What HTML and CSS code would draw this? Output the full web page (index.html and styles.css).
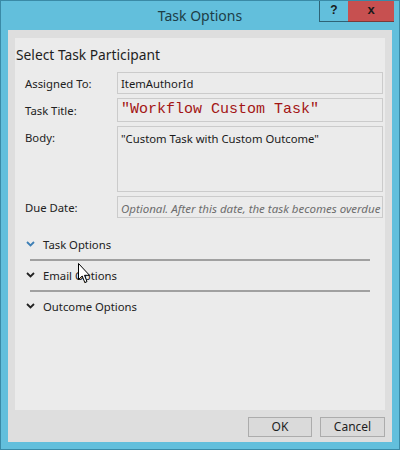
FILE: index.html
```html
<!DOCTYPE html>
<html>
<head>
<meta charset="utf-8">
<link rel="stylesheet" href="styles.css">
</head>
<body>
<div class="window">
  <div class="titlebar">
    <div></div>
    <div class="title">Task Options</div>
    <div class="controls">
      <div class="btn-help">?</div>
      <div class="btn-close">x</div>
    </div>
  </div>
  <div class="client">
    <div class="panel">
      <div class="heading">Select Task Participant</div>
      <div class="form">
        <div class="label">Assigned To:</div>
        <div class="field">ItemAuthorId</div>
        <div class="label label-title">Task Title:</div>
        <div class="field field-title">"Workflow Custom Task"</div>
        <div class="label">Body:</div>
        <div class="field field-body">"Custom Task with Custom Outcome"</div>
        <div class="label">Due Date:</div>
        <div class="field field-date">Optional. After this date, the task becomes overdue</div>
      </div>
      <div class="sections">
        <div class="section">
          <div class="section-head">
            <svg class="chev blue" width="9" height="6" viewBox="0 0 9 6"><path d="M1 1 L4.5 4.5 L8 1" fill="none" stroke="#3d7fb5" stroke-width="1.8"/></svg>
            <span>Task Options</span>
          </div>
          <div class="rule"></div>
        </div>
        <div class="section">
          <div class="section-head">
            <svg class="chev" width="9" height="6" viewBox="0 0 9 6"><path d="M1 1 L4.5 4.5 L8 1" fill="none" stroke="#222" stroke-width="1.8"/></svg>
            <span>Email Options</span>
          </div>
          <div class="rule"></div>
        </div>
        <div class="section">
          <div class="section-head">
            <svg class="chev" width="9" height="6" viewBox="0 0 9 6"><path d="M1 1 L4.5 4.5 L8 1" fill="none" stroke="#222" stroke-width="1.8"/></svg>
            <span>Outcome Options</span>
          </div>
        </div>
      </div>
      <svg class="cursor" width="13" height="21" viewBox="0 0 13 21"><path d="M0.5 0.5 L0.5 16.5 L4.2 13 L6.8 19.5 L9 18.6 L6.5 12.3 L11.5 12.3 Z" fill="#fff" stroke="#000" stroke-width="1" stroke-linejoin="miter"/></svg>
    </div>
    <div class="footer">
      <div class="button">OK</div>
      <div class="button">Cancel</div>
    </div>
  </div>
</div>
</body>
</html>
```

FILE: styles.css
```css
html, body {
  margin: 0;
  padding: 0;
}
body {
  width: 400px;
  height: 450px;
  font-family: "Noto Sans", "Open Sans", sans-serif;
  color: #1e1e1e;
}
.window {
  box-sizing: border-box;
  width: 400px;
  height: 450px;
  background: #62bfdc;
  border: 1px solid #3a8aa6;
  display: flex;
  flex-direction: column;
}
.titlebar {
  height: 29px;
  display: grid;
  grid-template-columns: 1fr auto 1fr;
  align-items: start;
}
.title {
  font-size: 14px;
  color: #1d3d47;
  line-height: 18px;
  padding-top: 6px;
}
.controls {
  justify-self: end;
  display: flex;
  margin-right: 5px;
}
.btn-help {
  box-sizing: border-box;
  width: 29px;
  height: 21px;
  border-left: 1px solid #2e6377;
  border-bottom: 1px solid #2e6377;
  font-weight: bold;
  font-size: 12px;
  text-align: center;
  line-height: 19px;
  color: #1a1a1a;
  font-family: "Liberation Sans", sans-serif;
}
.btn-close {
  box-sizing: border-box;
  width: 46px;
  height: 21px;
  background: #c75050;
  border-bottom: 1px solid #7a3a3a;
  font-weight: bold;
  font-size: 13px;
  text-align: center;
  line-height: 18px;
  color: #1a1a1a;
  font-family: "Liberation Sans", sans-serif;
}
.client {
  flex: 1;
  margin: 0 7px 7px 7px;
  background: #dedede;
  display: flex;
  flex-direction: column;
}
.panel {
  position: relative;
  margin: 8px 7px 0 7px;
  height: 372px;
  background: #ebebeb;
}
.heading {
  font-size: 13.8px;
  line-height: 20px;
  padding: 7px 0 0 1px;
  color: #1e1e1e;
}
.form {
  margin-top: 7px;
  display: grid;
  grid-template-columns: 92px 266px;
  row-gap: 4px;
  padding-left: 10px;
}
.label {
  font-size: 11.3px;
  line-height: 15px;
  padding-top: 4px;
  color: #222;
}
.label-title {
  padding-top: 5px;
}
.field {
  box-sizing: border-box;
  height: 22px;
  border: 1px solid #cbcbcb;
  background: #ebebeb;
  font-size: 11.3px;
  line-height: 15px;
  padding: 3px 3px 0 3px;
  white-space: nowrap;
  overflow: hidden;
  color: #1a1a1a;
}
.field-title {
  height: 24px;
  font-family: "Liberation Mono", monospace;
  font-size: 15px;
  line-height: 18px;
  padding-top: 2px;
  color: #a31515;
}
.field-body {
  height: 66px;
  padding-top: 4px;
}
.field-date {
  font-style: italic;
  font-size: 11.5px;
  color: #6d6d6d;
  padding-top: 4px;
}
.sections {
  margin-top: 16px;
  padding-left: 11px;
  width: 344px;
}
.section {
  display: flex;
  flex-direction: column;
}
.section-head {
  height: 20px;
  display: flex;
  align-items: center;
  font-size: 11.3px;
  color: #222;
}
.chev {
  margin: 0 8px 0 0;
  flex: none;
}
.rule {
  height: 2px;
  background: #a0a0a0;
  margin: 5px 0 4px 4px;
}
.cursor {
  position: absolute;
  left: 63px;
  top: 225px;
}
.footer {
  flex: 1;
  display: flex;
  justify-content: flex-end;
  gap: 8px;
  padding: 7px 7px 0 0;
}
.button {
  box-sizing: border-box;
  width: 64px;
  height: 20px;
  border: 1px solid #acacac;
  background: #dadada;
  font-size: 12px;
  line-height: 18px;
  text-align: center;
  color: #1e1e1e;
}
.button + .button {
  width: 65px;
}
```
